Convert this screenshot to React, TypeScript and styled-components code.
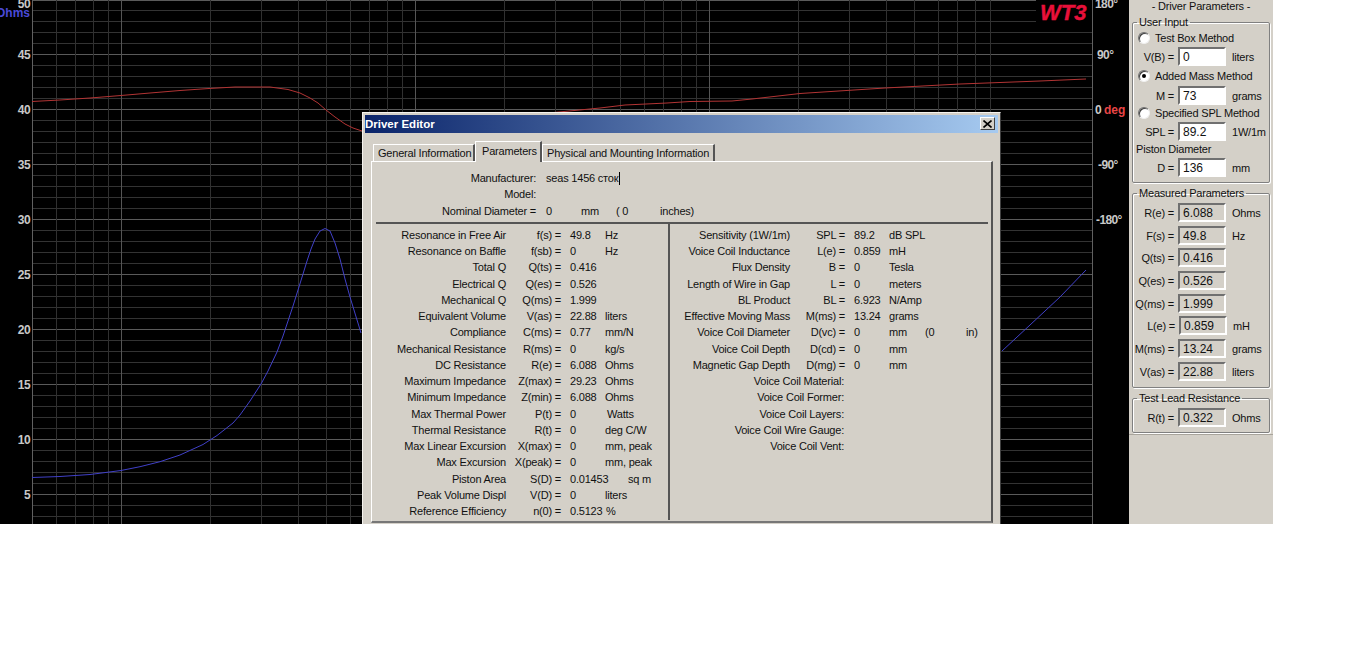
import React from 'react';
import styled, { createGlobalStyle } from 'styled-components';

const GlobalStyle = createGlobalStyle`
  html, body {
    margin: 0;
    background: #fff;
  }
  * {
    box-sizing: border-box;
  }
`;

const FACE = '#d4d0c8';
const FONT = '"Liberation Sans", Arial, sans-serif';

const Screen = styled.div`
  display: flex;
  width: 1273px;
  height: 524px;
  overflow: hidden;
  font-family: ${FONT};
  font-size: 11px;
  letter-spacing: -0.2px;
  color: #111;
`;

const ChartArea = styled.div`
  position: relative;
  flex: 0 0 1129px;
  height: 100%;
  background: #000;
`;

const ChartSvg = styled.svg`
  display: block;
`;

/* ---- dialog ---- */

const Dialog = styled.div`
  position: absolute;
  left: 362px;
  top: 112px;
  width: 639px;
  height: 412px;
  padding: 2px;
  background: ${FACE};
  border-top: 1px solid #f4f2ee;
  border-left: 1px solid #f4f2ee;
  border-right: 1px solid #404040;
`;

const TitleBar = styled.div`
  display: flex;
  align-items: center;
  justify-content: space-between;
  height: 18px;
  padding: 0 3px 0 0;
  background: linear-gradient(90deg, #0a246a, #a6caf0);
  color: #fff;
  font-weight: bold;
  font-size: 11.5px;
  letter-spacing: 0;
`;

const CloseButton = styled.div`
  display: flex;
  align-items: center;
  justify-content: center;
  width: 15px;
  height: 13px;
  margin-bottom: 1px;
  background: ${FACE};
  border: 1px solid;
  border-color: #fff #404040 #404040 #fff;
`;

const TabBar = styled.div`
  display: flex;
  align-items: flex-end;
  height: 20px;
  margin: 8px 0 0 8px;
`;

const Tab = styled.div<{ $active?: boolean; $width: number }>`
  position: relative;
  z-index: ${p => (p.$active ? 1 : 0)};
  width: ${p => p.$width}px;
  height: ${p => (p.$active ? 21 : 17)}px;
  margin-bottom: ${p => (p.$active ? -1 : 0)}px;
  padding: ${p => (p.$active ? '3px 0 0 6px' : '2px 0 0 4px')};
  line-height: 13px;
  background: ${FACE};
  border-top: 1px solid #fff;
  border-left: 1px solid #fff;
  border-right: 2px solid #555;
  white-space: nowrap;
`;

const TabPanel = styled.div`
  display: flex;
  flex-direction: column;
  width: 622px;
  height: 362px;
  margin-left: 6px;
  padding: 8px 3px 0 4px;
  border-top: 1px solid #fff;
  border-left: 1px solid #fff;
  border-right: 2px solid #555;
  border-bottom: 2px solid #777;
`;

const InfoRow = styled.div`
  display: grid;
  grid-template-columns: 160px 45px 35px 44px 1fr;
  height: 16.25px;
  line-height: 16px;
  white-space: nowrap;
`;

const InfoLabel = styled.div`
  text-align: right;
`;

const InfoValue = styled.div<{ $first?: boolean; $wide?: boolean }>`
  padding-left: ${p => (p.$first ? 10 : 0)}px;
  grid-column: ${p => (p.$wide ? '2 / 6' : 'auto')};
`;

const Caret = styled.span`
  display: inline-block;
  width: 1px;
  height: 13px;
  margin-left: 1px;
  vertical-align: -3px;
  background: #000;
`;

const HDivider = styled.div`
  flex: none;
  height: 2px;
  margin-top: 3px;
  background: #555;
`;

const Columns = styled.div`
  display: flex;
  flex: 1;
  min-height: 0;
`;

const ParamColumn = styled.div<{ $width: number; $divider?: boolean }>`
  flex: 0 0 ${p => p.$width}px;
  min-width: 0;
  padding-top: 3px;
  border-right: ${p => (p.$divider ? '2px solid #555' : 'none')};
  margin-bottom: ${p => (p.$divider ? 1 : 0)}px;
`;

const ParamRow = styled.div<{ $labelWidth: number }>`
  display: grid;
  grid-template-columns: ${p => p.$labelWidth}px 55px 44px 36px 41px 1fr;
  height: 16.25px;
  line-height: 16px;
  white-space: nowrap;
`;

const ParamLabel = styled.div<{ $wide?: boolean }>`
  text-align: right;
  grid-column: ${p => (p.$wide ? '1 / 3' : 'auto')};
  padding-right: ${p => (p.$wide ? 1 : 0)}px;
`;

const ParamSymbol = styled.div`
  text-align: right;
`;

const ParamValue = styled.div`
  padding-left: 9px;
`;

const ParamUnit = styled.div<{ $shift?: number }>`
  padding-left: ${p => p.$shift ?? 0}px;
`;

/* ---- side panel ---- */

const SidePanel = styled.div`
  flex: 1;
  display: flex;
  flex-direction: column;
  padding: 0 3px 0 3px;
  background: ${FACE};
`;

const SideTitle = styled.div`
  height: 15.5px;
  line-height: 13px;
  text-align: center;
`;

const Group = styled.fieldset<{ $top: number; $pad: number; $gap?: number; $mt?: number }>`
  display: flex;
  flex-direction: column;
  gap: ${p => p.$gap ?? 0}px;
  min-width: 0;
  margin: ${p => p.$mt ?? 0}px 0 0;
  padding: ${p => p.$top}px 0 ${p => p.$pad}px;
  border: 1px solid #808080;
  border-radius: 2px;
  box-shadow: 1px 1px 0 #fff, inset 1px 1px 0 #fff;
`;

const Legend = styled.legend`
  margin-left: 4px;
  padding: 0 2px;
  line-height: 13px;
`;

const RadioRow = styled.div<{ $mt?: number }>`
  display: flex;
  align-items: center;
  gap: 5px;
  height: 13px;
  margin-top: ${p => p.$mt ?? 0}px;
  padding-left: 5px;
  white-space: nowrap;
`;

const Radio = styled.span<{ $checked?: boolean }>`
  position: relative;
  flex: none;
  width: 12px;
  height: 12px;
  border-radius: 50%;
  background: #fff;
  border: 1px solid;
  border-color: #6f6f6f #f0f0f0 #f0f0f0 #6f6f6f;
  box-shadow: inset 1px 1px 0 #404040;

  &::after {
    content: '';
    display: ${p => (p.$checked ? 'block' : 'none')};
    position: absolute;
    left: 3px;
    top: 3px;
    width: 4px;
    height: 4px;
    border-radius: 50%;
    background: #000;
  }
`;

const FieldRow = styled.div<{ $mt?: number; $shift?: number }>`
  display: grid;
  grid-template-columns: ${p => 45 + (p.$shift ?? 0)}px 48px 1fr;
  align-items: center;
  height: 19px;
  margin-top: ${p => p.$mt ?? 0}px;
  white-space: nowrap;
`;

const FieldLabel = styled.div`
  padding-right: 4px;
  padding-top: 1px;
  text-align: right;
`;

const FieldBox = styled.input<{ $readOnlyLook?: boolean }>`
  width: 48px;
  height: 19px;
  padding: 1px 0 0 3px;
  font-family: ${FONT};
  font-size: 12px;
  color: #111;
  background: ${p => (p.$readOnlyLook ? FACE : '#fff')};
  border: 2px solid;
  border-color: #707070 #fff #fff #707070;
  border-radius: 0;
  outline: none;
`;

const FieldUnit = styled.div`
  padding-left: 6px;
  padding-top: 1px;
`;

const PlainLabel = styled.div`
  height: 13px;
  margin-top: 1.5px;
  padding-left: 3px;
  line-height: 13px;
`;

const PanelFoot = styled.div`
  flex: 1;
  margin: 1px -3px 0;
  border-top: 1px solid #a8a49c;
`;

/* ---- chart ---- */

const X0 = 121;
const DECADE = 294;
const verticals: { x: number; major: boolean }[] = [];
for (let k = -1; k <= 2; k++) {
  for (let n = 1; n <= 9; n++) {
    const x = X0 + DECADE * (k + Math.log10(n));
    if (x > 33 && x < 1090) verticals.push({ x: Math.round(x) + 0.5, major: n === 1 });
  }
}

const horizontals: { y: number; major: boolean }[] = [];
for (let k = 0; k <= 48; k++) {
  horizontals.push({ y: k === 0 ? 0.5 : 11 * k - 0.5, major: k % 5 === 0 });
}

const RED = [
  [32, 101.5], [60, 100], [90, 98], [121, 95.5], [150, 93], [180, 90.5], [209, 88.5], [235, 87], [270, 87],
  [288, 89.5], [300, 93], [310, 98], [318, 103], [326, 110], [335, 117], [345, 124], [353, 128], [362, 131],
  [564, 111.5], [600, 108], [625, 105], [667, 103], [690, 101.5], [732, 101], [752, 99], [800, 93.5], [885, 88],
  [960, 84], [1000, 82.5], [1040, 81], [1086, 79],
];

const BLUE_LEFT = [
  [32, 477.5], [60, 476.5], [90, 474.5], [121, 470.5], [140, 466.7], [160, 461.7], [180, 455], [203, 444.5],
  [217, 435.5], [233, 423], [240, 415], [250, 401], [261, 384], [268, 371], [277, 352], [283, 336],
  [288, 321], [293, 306], [298, 290], [303, 274], [307, 261], [311, 249], [315, 239], [320, 231], [325, 228.5],
  [330, 231], [335, 243], [340, 259], [345, 279], [350, 297], [361, 333],
];

const BLUE_RIGHT = [[1002, 351], [1030, 325], [1060, 297], [1086, 270]];

const toPoints = (pts: number[][]) => pts.map(p => p.join(',')).join(' ');

const OHM_LABELS: [string, number][] = [
  ['50', 4], ['45', 55], ['40', 110], ['35', 165], ['30', 220], ['25', 275], ['20', 330], ['15', 385], ['10', 440], ['5', 495],
];

const DEG_LABELS: [string, number, number][] = [
  ['180°', 1095, 4], ['90°', 1097, 55], ['-90°', 1098, 165], ['-180°', 1096, 220],
];

const Chart = () => (
  <ChartSvg width={1129} height={524} viewBox="0 0 1129 524" fontFamily={FONT} fontWeight="bold" fontSize={12} letterSpacing={-0.6}>
    <g shapeRendering="crispEdges" strokeWidth={1}>
      {horizontals.map(h => (
        <line key={h.y} x1={32} x2={1092} y1={h.y} y2={h.y} stroke={h.major ? '#5a5a5a' : '#333'} />
      ))}
      {verticals.map(v => (
        <line key={v.x} x1={v.x} x2={v.x} y1={0} y2={524} stroke={v.major ? '#555' : '#303030'} />
      ))}
      <line x1={32.5} x2={32.5} y1={0} y2={524} stroke="#606060" />
      <line x1={1092.5} x2={1092.5} y1={0} y2={524} stroke="#606060" />
    </g>
    <rect x={1036} y={0} width={56} height={22} fill="#000" />
    <polyline points={toPoints(RED)} fill="none" stroke="#b23434" strokeWidth={1} />
    <polyline points={toPoints(BLUE_LEFT)} fill="none" stroke="#4040c8" strokeWidth={1} />
    <polyline points={toPoints(BLUE_RIGHT)} fill="none" stroke="#4040c8" strokeWidth={1} />
    {OHM_LABELS.map(([t, y]) => (
      <text key={t} x={30} y={y + 4} textAnchor="end" fill="#c8c8c8">{t}</text>
    ))}
    <text x={30} y={17} textAnchor="end" fill="#4a4ad8" letterSpacing={0}>Ohms</text>
    {DEG_LABELS.map(([t, x, y]) => (
      <text key={t} x={x} y={y + 4} fill="#c8c8c8">{t}</text>
    ))}
    <text x={1095} y={114} fill="#c8c8c8">0</text>
    <text x={1104} y={114} fill="#e84545" letterSpacing={0}>deg</text>
    <text x={1040} y={20} fill="#e8103a" stroke="#e8103a" strokeWidth={0.4} fontSize={22} fontStyle="italic" letterSpacing={0}>WT3</text>
  </ChartSvg>
);

/* ---- data ---- */

type Param = { label: string; symbol: string; value: string; unit?: string; shift?: number };

const LEFT_PARAMS: Param[] = [
  { label: 'Resonance in Free Air', symbol: 'f(s) =', value: '49.8', unit: 'Hz' },
  { label: 'Resonance on Baffle', symbol: 'f(sb) =', value: '0', unit: 'Hz' },
  { label: 'Total Q', symbol: 'Q(ts) =', value: '0.416' },
  { label: 'Electrical Q', symbol: 'Q(es) =', value: '0.526' },
  { label: 'Mechanical Q', symbol: 'Q(ms) =', value: '1.999' },
  { label: 'Equivalent Volume', symbol: 'V(as) =', value: '22.88', unit: 'liters' },
  { label: 'Compliance', symbol: 'C(ms) =', value: '0.77', unit: 'mm/N' },
  { label: 'Mechanical Resistance', symbol: 'R(ms) =', value: '0', unit: 'kg/s' },
  { label: 'DC Resistance', symbol: 'R(e) =', value: '6.088', unit: 'Ohms' },
  { label: 'Maximum Impedance', symbol: 'Z(max) =', value: '29.23', unit: 'Ohms' },
  { label: 'Minimum Impedance', symbol: 'Z(min) =', value: '6.088', unit: 'Ohms' },
  { label: 'Max Thermal Power', symbol: 'P(t) =', value: '0', unit: 'Watts', shift: 2 },
  { label: 'Thermal Resistance', symbol: 'R(t) =', value: '0', unit: 'deg C/W' },
  { label: 'Max Linear Excursion', symbol: 'X(max) =', value: '0', unit: 'mm, peak' },
  { label: 'Max Excursion', symbol: 'X(peak) =', value: '0', unit: 'mm, peak' },
  { label: 'Piston Area', symbol: 'S(D) =', value: '0.01453', unit: 'sq m', shift: 23 },
  { label: 'Peak Volume Displ', symbol: 'V(D) =', value: '0', unit: 'liters' },
  { label: 'Reference Efficiency', symbol: 'n(0) =', value: '0.5123', unit: '%', shift: 1 },
];

const RIGHT_PARAMS: Param[] = [
  { label: 'Sensitivity (1W/1m)', symbol: 'SPL =', value: '89.2', unit: 'dB SPL' },
  { label: 'Voice Coil Inductance', symbol: 'L(e) =', value: '0.859', unit: 'mH' },
  { label: 'Flux Density', symbol: 'B =', value: '0', unit: 'Tesla' },
  { label: 'Length of Wire in Gap', symbol: 'L =', value: '0', unit: 'meters' },
  { label: 'BL Product', symbol: 'BL =', value: '6.923', unit: 'N/Amp' },
  { label: 'Effective Moving Mass', symbol: 'M(ms) =', value: '13.24', unit: 'grams' },
  { label: 'Voice Coil Diameter', symbol: 'D(vc) =', value: '0', unit: 'mm' },
  { label: 'Voice Coil Depth', symbol: 'D(cd) =', value: '0', unit: 'mm' },
  { label: 'Magnetic Gap Depth', symbol: 'D(mg) =', value: '0', unit: 'mm' },
];

const RIGHT_TEXT_ONLY = ['Voice Coil Material:', 'Voice Coil Former:', 'Voice Coil Layers:', 'Voice Coil Wire Gauge:', 'Voice Coil Vent:'];

const MEASURED: [string, string, string?, number?][] = [
  ['R(e) =', '6.088', 'Ohms'],
  ['F(s) =', '49.8', 'Hz'],
  ['Q(ts) =', '0.416'],
  ['Q(es) =', '0.526'],
  ['Q(ms) =', '1.999'],
  ['L(e) =', '0.859', 'mH', 1],
  ['M(ms) =', '13.24', 'grams'],
  ['V(as) =', '22.88', 'liters'],
];

const Field = ({ label, value, unit, gray, mt, shift }: {
  label: string; value: string; unit?: string; gray?: boolean; mt?: number; shift?: number;
}) => (
  <FieldRow $mt={mt} $shift={shift}>
    <FieldLabel>{label}</FieldLabel>
    <FieldBox $readOnlyLook={gray} value={value} readOnly />
    <FieldUnit>{unit}</FieldUnit>
  </FieldRow>
);

const ParamLine = ({ p, labelWidth }: { p: Param; labelWidth: number }) => (
  <ParamRow $labelWidth={labelWidth}>
    <ParamLabel>{p.label}</ParamLabel>
    <ParamSymbol>{p.symbol}</ParamSymbol>
    <ParamValue>{p.value}</ParamValue>
    <ParamUnit $shift={p.shift}>{p.unit}</ParamUnit>
  </ParamRow>
);

export default function App() {
  return (
    <Screen>
      <GlobalStyle />
      <ChartArea>
        <Chart />
        <Dialog>
          <TitleBar>
            Driver Editor
            <CloseButton>
              <svg width="9" height="8" viewBox="0 0 9 8">
                <path d="M0.5 0.5L8.5 7.5M8.5 0.5L0.5 7.5" stroke="#000" strokeWidth="1.6" />
              </svg>
            </CloseButton>
          </TitleBar>
          <TabBar>
            <Tab $width={102}>General Information</Tab>
            <Tab $width={67} $active>Parameters</Tab>
            <Tab $width={173}>Physical and Mounting Information</Tab>
          </TabBar>
          <TabPanel>
            <InfoRow>
              <InfoLabel>Manufacturer:</InfoLabel>
              <InfoValue $first $wide>seas 1456 сток<Caret /></InfoValue>
            </InfoRow>
            <InfoRow>
              <InfoLabel>Model:</InfoLabel>
            </InfoRow>
            <InfoRow>
              <InfoLabel>Nominal Diameter =</InfoLabel>
              <InfoValue $first>0</InfoValue>
              <InfoValue>mm</InfoValue>
              <InfoValue>( 0</InfoValue>
              <InfoValue>inches)</InfoValue>
            </InfoRow>
            <HDivider />
            <Columns>
              <ParamColumn $width={294} $divider>
                {LEFT_PARAMS.map(p => <ParamLine key={p.label} p={p} labelWidth={130} />)}
              </ParamColumn>
              <ParamColumn $width={318}>
                {RIGHT_PARAMS.map((p, i) => (
                  i === 6 ? (
                    <ParamRow key={p.label} $labelWidth={120}>
                      <ParamLabel>{p.label}</ParamLabel>
                      <ParamSymbol>{p.symbol}</ParamSymbol>
                      <ParamValue>{p.value}</ParamValue>
                      <ParamUnit>{p.unit}</ParamUnit>
                      <ParamUnit>(0</ParamUnit>
                      <ParamUnit>in)</ParamUnit>
                    </ParamRow>
                  ) : <ParamLine key={p.label} p={p} labelWidth={120} />
                ))}
                {RIGHT_TEXT_ONLY.map(t => (
                  <ParamRow key={t} $labelWidth={120}>
                    <ParamLabel $wide>{t}</ParamLabel>
                  </ParamRow>
                ))}
              </ParamColumn>
            </Columns>
          </TabPanel>
        </Dialog>
      </ChartArea>
      <SidePanel>
        <SideTitle>- Driver Parameters -</SideTitle>
        <Group $top={3} $pad={5}>
          <Legend>User Input</Legend>
          <RadioRow><Radio />Test Box Method</RadioRow>
          <Field label="V(B) =" value="0" unit="liters" mt={2.5} />
          <RadioRow $mt={3.5}><Radio $checked />Added Mass Method</RadioRow>
          <Field label="M =" value="73" unit="grams" mt={3} />
          <RadioRow $mt={1.5}><Radio />Specified SPL Method</RadioRow>
          <Field label="SPL =" value="89.2" unit="1W/1m" mt={3} />
          <PlainLabel>Piston Diameter</PlainLabel>
          <Field label="D =" value="136" unit="mm" mt={2.5} />
        </Group>
        <Group $top={3.5} $pad={6} $gap={3.7} $mt={3.5}>
          <Legend>Measured Parameters</Legend>
          {MEASURED.map(([label, value, unit, shift]) => (
            <Field key={label} label={label} value={value} unit={unit} shift={shift} gray />
          ))}
        </Group>
        <Group $top={3} $pad={5} $mt={4}>
          <Legend>Test Lead Resistance</Legend>
          <Field label="R(t) =" value="0.322" unit="Ohms" gray />
        </Group>
        <PanelFoot />
      </SidePanel>
    </Screen>
  );
}
